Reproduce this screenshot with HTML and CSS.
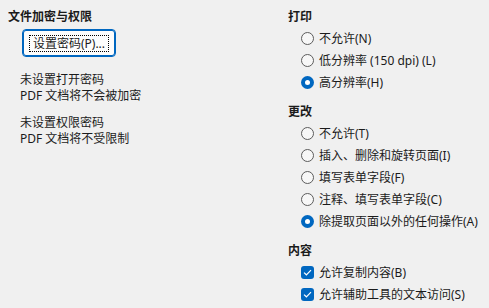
FILE: index.html
```html
<!DOCTYPE html>
<html lang="zh-CN">
<head>
  <meta charset="UTF-8" />
  <title>文档属性 - 安全</title>
  <link rel="stylesheet" href="styles.css">
</head>
<body>

<div class="security-page">
  <!-- 左侧：加密 -->
  <div class="col">
    <div class="group-title">文件加密与权限</div>
    <button class="pwd-btn"><span class="focus-ring">设置密码(P)...</span></button>

    <div class="note">
      <div>未设置打开密码</div>
      <div>PDF 文档将不会被加密</div>
    </div>
    <div class="note">
      <div>未设置权限密码</div>
      <div>PDF 文档将不受限制</div>
    </div>
  </div>

  <!-- 右侧：权限 -->
  <div class="col">
    <div class="section">
      <div class="group-title">打印</div>
      <label class="opt"><span class="radio"></span>不允许(N)</label>
      <label class="opt"><span class="radio"></span>低分辨率 (150 dpi) (L)</label>
      <label class="opt"><span class="radio on"></span>高分辨率(H)</label>
    </div>

    <div class="section">
      <div class="group-title">更改</div>
      <label class="opt"><span class="radio"></span>不允许(T)</label>
      <label class="opt"><span class="radio"></span>插入、删除和旋转页面(I)</label>
      <label class="opt"><span class="radio"></span>填写表单字段(F)</label>
      <label class="opt"><span class="radio"></span>注释、填写表单字段(C)</label>
      <label class="opt"><span class="radio on"></span>除提取页面以外的任何操作(A)</label>
    </div>

    <div class="section">
      <div class="group-title">内容</div>
      <label class="opt">
        <span class="check"><svg width="9" height="7" viewBox="0 0 9 7"><path d="M1 3.6 L3.4 5.8 L8 1.2" fill="none" stroke="#fff" stroke-width="1.2"/></svg></span>允许复制内容(B)
      </label>
      <label class="opt">
        <span class="check"><svg width="9" height="7" viewBox="0 0 9 7"><path d="M1 3.6 L3.4 5.8 L8 1.2" fill="none" stroke="#fff" stroke-width="1.2"/></svg></span>允许辅助工具的文本访问(S)
      </label>
    </div>
  </div>
</div>

</body>
</html>
```

FILE: styles.css
```css
body {
  margin: 0;
  background: #f0f0f0;
  font-family: "Noto Sans", "Noto Sans CJK SC", sans-serif;
  font-size: 12px;
  color: #1b1b1b;
}

.security-page {
  display: grid;
  grid-template-columns: 288px 1fr;
  padding-top: 9px;
}

.col:first-child {
  padding-left: 8px;
}

.group-title {
  font-weight: bold;
  line-height: 16px;
  margin-bottom: 2px;
}

.pwd-btn {
  display: flex;
  align-items: center;
  justify-content: center;
  width: 94px;
  height: 28px;
  margin: 4px 0 0 14px;
  padding: 0;
  background: #fdfdfd;
  border: 1px solid #0067c0;
  box-shadow: inset 0 0 0 1px #0067c0;
  border-radius: 4px;
  font: inherit;
  color: inherit;
}

.focus-ring {
  line-height: 15px;
  padding: 0 3px;
  outline: 1px dotted #000;
}

.note {
  margin: 15px 0 0 12px;
  line-height: 16px;
}

.note + .note {
  margin-top: 11px;
}

.section {
  margin-bottom: 11px;
}

.opt {
  display: flex;
  align-items: center;
  height: 22px;
  padding-left: 13px;
}

.radio {
  width: 11px;
  height: 11px;
  border: 1px solid #5c5c5c;
  border-radius: 50%;
  background: #f7f7f7;
  margin-right: 5px;
  box-sizing: content-box;
}

.radio.on {
  width: 13px;
  height: 13px;
  border: none;
  background: #0067c0;
  position: relative;
}

.radio.on::after {
  content: "";
  position: absolute;
  left: 4px;
  top: 4px;
  width: 5px;
  height: 5px;
  border-radius: 50%;
  background: #fff;
}

.check {
  display: flex;
  align-items: center;
  justify-content: center;
  width: 13px;
  height: 13px;
  border-radius: 3px;
  background: #0067c0;
  margin-right: 5px;
}
```
